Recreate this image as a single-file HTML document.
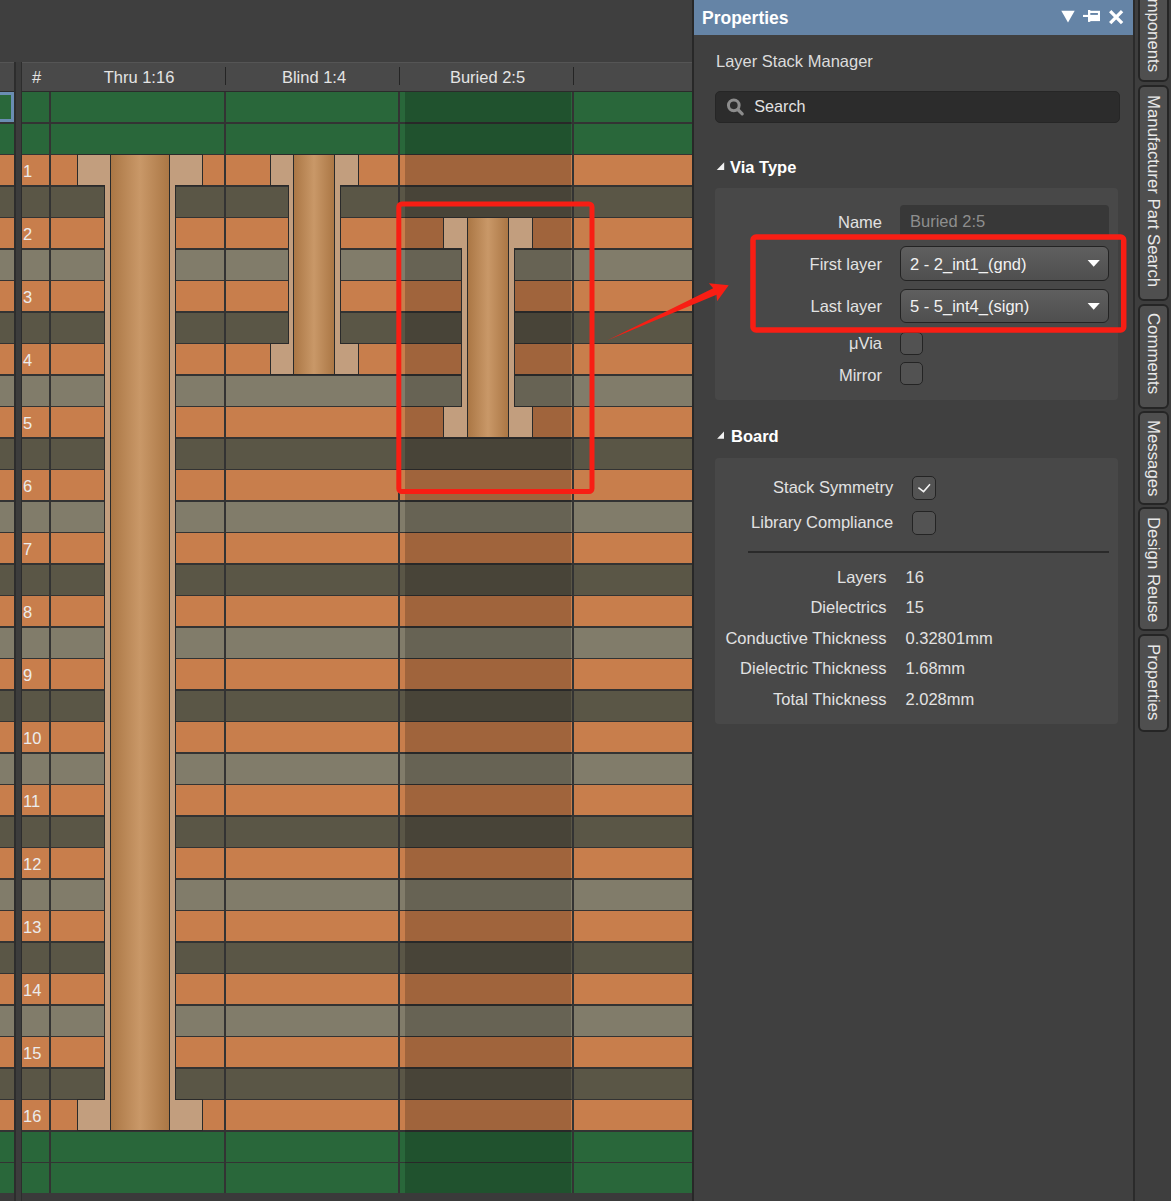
<!DOCTYPE html>
<html><head><meta charset="utf-8"><style>
html,body{margin:0;padding:0}
body{width:1171px;height:1201px;overflow:hidden;position:relative;background:#404040;font-family:"Liberation Sans", sans-serif;color:#e2e2e2}
.hd{position:absolute;top:66.7px;height:20px;line-height:20px;font-size:16.5px;text-align:center;color:#e4e4e4;white-space:nowrap}
.tx{position:absolute;font-size:16.5px;line-height:0;white-space:nowrap;color:#e2e2e2}
.tx::before,.txr::before{content:'';}
.txr{position:absolute;font-size:16.5px;line-height:0;white-space:nowrap;color:#e2e2e2;text-align:right}
.vt{position:absolute;writing-mode:vertical-rl;font-size:16.8px;line-height:20px;white-space:nowrap;color:#e8e8e8}
.lbl{position:absolute;left:23px;font-size:16.5px;line-height:19px;color:#ececec}
</style></head><body>
<svg width="694" height="1201" viewBox="0 0 694 1201" style="position:absolute;left:0;top:0" shape-rendering="crispEdges">
<defs><linearGradient id="bar" x1="0" x2="1" y1="0" y2="0"><stop offset="0" stop-color="#ab7745"/><stop offset="0.5" stop-color="#c99868"/><stop offset="1" stop-color="#ab7745"/></linearGradient></defs>
<rect x="0" y="0" width="694" height="1201" fill="#3f3f3f"/>
<rect x="0" y="62" width="692" height="29" fill="#494949"/>
<rect x="0" y="62" width="692" height="1" fill="#555555"/>
<rect x="0" y="91" width="692" height="1102" fill="#333333"/>
<rect x="0" y="91" width="692" height="1" fill="#2b2b2b"/>
<rect x="0" y="1193" width="692" height="8" fill="#3a3a3a"/>
<rect x="692" y="0" width="2" height="1201" fill="#282828"/>
<rect x="0" y="92" width="14" height="30" fill="#29673a"/>
<rect x="22" y="92" width="27" height="30" fill="#29673a"/>
<rect x="51" y="92" width="173" height="30" fill="#29673a"/>
<rect x="226" y="92" width="172" height="30" fill="#29673a"/>
<rect x="400" y="92" width="172" height="30" fill="#29673a"/>
<rect x="574" y="92" width="118" height="30" fill="#29673a"/>
<rect x="0" y="124" width="14" height="30" fill="#29673a"/>
<rect x="22" y="124" width="27" height="30" fill="#29673a"/>
<rect x="51" y="124" width="173" height="30" fill="#29673a"/>
<rect x="226" y="124" width="172" height="30" fill="#29673a"/>
<rect x="400" y="124" width="172" height="30" fill="#29673a"/>
<rect x="574" y="124" width="118" height="30" fill="#29673a"/>
<rect x="0" y="155" width="14" height="30" fill="#c87e4c"/>
<rect x="22" y="155" width="27" height="30" fill="#c87e4c"/>
<rect x="51" y="155" width="173" height="30" fill="#c87e4c"/>
<rect x="226" y="155" width="172" height="30" fill="#c87e4c"/>
<rect x="400" y="155" width="172" height="30" fill="#c87e4c"/>
<rect x="574" y="155" width="118" height="30" fill="#c87e4c"/>
<rect x="0" y="187" width="14" height="30" fill="#5a5646"/>
<rect x="22" y="187" width="27" height="30" fill="#5a5646"/>
<rect x="51" y="187" width="173" height="30" fill="#5a5646"/>
<rect x="226" y="187" width="172" height="30" fill="#5a5646"/>
<rect x="400" y="187" width="172" height="30" fill="#5a5646"/>
<rect x="574" y="187" width="118" height="30" fill="#5a5646"/>
<rect x="0" y="218" width="14" height="30" fill="#c87e4c"/>
<rect x="22" y="218" width="27" height="30" fill="#c87e4c"/>
<rect x="51" y="218" width="173" height="30" fill="#c87e4c"/>
<rect x="226" y="218" width="172" height="30" fill="#c87e4c"/>
<rect x="400" y="218" width="172" height="30" fill="#c87e4c"/>
<rect x="574" y="218" width="118" height="30" fill="#c87e4c"/>
<rect x="0" y="250" width="14" height="30" fill="#817c6a"/>
<rect x="22" y="250" width="27" height="30" fill="#817c6a"/>
<rect x="51" y="250" width="173" height="30" fill="#817c6a"/>
<rect x="226" y="250" width="172" height="30" fill="#817c6a"/>
<rect x="400" y="250" width="172" height="30" fill="#817c6a"/>
<rect x="574" y="250" width="118" height="30" fill="#817c6a"/>
<rect x="0" y="281" width="14" height="30" fill="#c87e4c"/>
<rect x="22" y="281" width="27" height="30" fill="#c87e4c"/>
<rect x="51" y="281" width="173" height="30" fill="#c87e4c"/>
<rect x="226" y="281" width="172" height="30" fill="#c87e4c"/>
<rect x="400" y="281" width="172" height="30" fill="#c87e4c"/>
<rect x="574" y="281" width="118" height="30" fill="#c87e4c"/>
<rect x="0" y="313" width="14" height="30" fill="#5a5646"/>
<rect x="22" y="313" width="27" height="30" fill="#5a5646"/>
<rect x="51" y="313" width="173" height="30" fill="#5a5646"/>
<rect x="226" y="313" width="172" height="30" fill="#5a5646"/>
<rect x="400" y="313" width="172" height="30" fill="#5a5646"/>
<rect x="574" y="313" width="118" height="30" fill="#5a5646"/>
<rect x="0" y="344" width="14" height="30" fill="#c87e4c"/>
<rect x="22" y="344" width="27" height="30" fill="#c87e4c"/>
<rect x="51" y="344" width="173" height="30" fill="#c87e4c"/>
<rect x="226" y="344" width="172" height="30" fill="#c87e4c"/>
<rect x="400" y="344" width="172" height="30" fill="#c87e4c"/>
<rect x="574" y="344" width="118" height="30" fill="#c87e4c"/>
<rect x="0" y="376" width="14" height="30" fill="#817c6a"/>
<rect x="22" y="376" width="27" height="30" fill="#817c6a"/>
<rect x="51" y="376" width="173" height="30" fill="#817c6a"/>
<rect x="226" y="376" width="172" height="30" fill="#817c6a"/>
<rect x="400" y="376" width="172" height="30" fill="#817c6a"/>
<rect x="574" y="376" width="118" height="30" fill="#817c6a"/>
<rect x="0" y="407" width="14" height="30" fill="#c87e4c"/>
<rect x="22" y="407" width="27" height="30" fill="#c87e4c"/>
<rect x="51" y="407" width="173" height="30" fill="#c87e4c"/>
<rect x="226" y="407" width="172" height="30" fill="#c87e4c"/>
<rect x="400" y="407" width="172" height="30" fill="#c87e4c"/>
<rect x="574" y="407" width="118" height="30" fill="#c87e4c"/>
<rect x="0" y="439" width="14" height="30" fill="#5a5646"/>
<rect x="22" y="439" width="27" height="30" fill="#5a5646"/>
<rect x="51" y="439" width="173" height="30" fill="#5a5646"/>
<rect x="226" y="439" width="172" height="30" fill="#5a5646"/>
<rect x="400" y="439" width="172" height="30" fill="#5a5646"/>
<rect x="574" y="439" width="118" height="30" fill="#5a5646"/>
<rect x="0" y="470" width="14" height="30" fill="#c87e4c"/>
<rect x="22" y="470" width="27" height="30" fill="#c87e4c"/>
<rect x="51" y="470" width="173" height="30" fill="#c87e4c"/>
<rect x="226" y="470" width="172" height="30" fill="#c87e4c"/>
<rect x="400" y="470" width="172" height="30" fill="#c87e4c"/>
<rect x="574" y="470" width="118" height="30" fill="#c87e4c"/>
<rect x="0" y="502" width="14" height="30" fill="#817c6a"/>
<rect x="22" y="502" width="27" height="30" fill="#817c6a"/>
<rect x="51" y="502" width="173" height="30" fill="#817c6a"/>
<rect x="226" y="502" width="172" height="30" fill="#817c6a"/>
<rect x="400" y="502" width="172" height="30" fill="#817c6a"/>
<rect x="574" y="502" width="118" height="30" fill="#817c6a"/>
<rect x="0" y="533" width="14" height="30" fill="#c87e4c"/>
<rect x="22" y="533" width="27" height="30" fill="#c87e4c"/>
<rect x="51" y="533" width="173" height="30" fill="#c87e4c"/>
<rect x="226" y="533" width="172" height="30" fill="#c87e4c"/>
<rect x="400" y="533" width="172" height="30" fill="#c87e4c"/>
<rect x="574" y="533" width="118" height="30" fill="#c87e4c"/>
<rect x="0" y="565" width="14" height="30" fill="#5a5646"/>
<rect x="22" y="565" width="27" height="30" fill="#5a5646"/>
<rect x="51" y="565" width="173" height="30" fill="#5a5646"/>
<rect x="226" y="565" width="172" height="30" fill="#5a5646"/>
<rect x="400" y="565" width="172" height="30" fill="#5a5646"/>
<rect x="574" y="565" width="118" height="30" fill="#5a5646"/>
<rect x="0" y="596" width="14" height="30" fill="#c87e4c"/>
<rect x="22" y="596" width="27" height="30" fill="#c87e4c"/>
<rect x="51" y="596" width="173" height="30" fill="#c87e4c"/>
<rect x="226" y="596" width="172" height="30" fill="#c87e4c"/>
<rect x="400" y="596" width="172" height="30" fill="#c87e4c"/>
<rect x="574" y="596" width="118" height="30" fill="#c87e4c"/>
<rect x="0" y="628" width="14" height="30" fill="#817c6a"/>
<rect x="22" y="628" width="27" height="30" fill="#817c6a"/>
<rect x="51" y="628" width="173" height="30" fill="#817c6a"/>
<rect x="226" y="628" width="172" height="30" fill="#817c6a"/>
<rect x="400" y="628" width="172" height="30" fill="#817c6a"/>
<rect x="574" y="628" width="118" height="30" fill="#817c6a"/>
<rect x="0" y="659" width="14" height="30" fill="#c87e4c"/>
<rect x="22" y="659" width="27" height="30" fill="#c87e4c"/>
<rect x="51" y="659" width="173" height="30" fill="#c87e4c"/>
<rect x="226" y="659" width="172" height="30" fill="#c87e4c"/>
<rect x="400" y="659" width="172" height="30" fill="#c87e4c"/>
<rect x="574" y="659" width="118" height="30" fill="#c87e4c"/>
<rect x="0" y="691" width="14" height="30" fill="#5a5646"/>
<rect x="22" y="691" width="27" height="30" fill="#5a5646"/>
<rect x="51" y="691" width="173" height="30" fill="#5a5646"/>
<rect x="226" y="691" width="172" height="30" fill="#5a5646"/>
<rect x="400" y="691" width="172" height="30" fill="#5a5646"/>
<rect x="574" y="691" width="118" height="30" fill="#5a5646"/>
<rect x="0" y="722" width="14" height="30" fill="#c87e4c"/>
<rect x="22" y="722" width="27" height="30" fill="#c87e4c"/>
<rect x="51" y="722" width="173" height="30" fill="#c87e4c"/>
<rect x="226" y="722" width="172" height="30" fill="#c87e4c"/>
<rect x="400" y="722" width="172" height="30" fill="#c87e4c"/>
<rect x="574" y="722" width="118" height="30" fill="#c87e4c"/>
<rect x="0" y="754" width="14" height="30" fill="#817c6a"/>
<rect x="22" y="754" width="27" height="30" fill="#817c6a"/>
<rect x="51" y="754" width="173" height="30" fill="#817c6a"/>
<rect x="226" y="754" width="172" height="30" fill="#817c6a"/>
<rect x="400" y="754" width="172" height="30" fill="#817c6a"/>
<rect x="574" y="754" width="118" height="30" fill="#817c6a"/>
<rect x="0" y="785" width="14" height="30" fill="#c87e4c"/>
<rect x="22" y="785" width="27" height="30" fill="#c87e4c"/>
<rect x="51" y="785" width="173" height="30" fill="#c87e4c"/>
<rect x="226" y="785" width="172" height="30" fill="#c87e4c"/>
<rect x="400" y="785" width="172" height="30" fill="#c87e4c"/>
<rect x="574" y="785" width="118" height="30" fill="#c87e4c"/>
<rect x="0" y="817" width="14" height="30" fill="#5a5646"/>
<rect x="22" y="817" width="27" height="30" fill="#5a5646"/>
<rect x="51" y="817" width="173" height="30" fill="#5a5646"/>
<rect x="226" y="817" width="172" height="30" fill="#5a5646"/>
<rect x="400" y="817" width="172" height="30" fill="#5a5646"/>
<rect x="574" y="817" width="118" height="30" fill="#5a5646"/>
<rect x="0" y="848" width="14" height="30" fill="#c87e4c"/>
<rect x="22" y="848" width="27" height="30" fill="#c87e4c"/>
<rect x="51" y="848" width="173" height="30" fill="#c87e4c"/>
<rect x="226" y="848" width="172" height="30" fill="#c87e4c"/>
<rect x="400" y="848" width="172" height="30" fill="#c87e4c"/>
<rect x="574" y="848" width="118" height="30" fill="#c87e4c"/>
<rect x="0" y="880" width="14" height="30" fill="#817c6a"/>
<rect x="22" y="880" width="27" height="30" fill="#817c6a"/>
<rect x="51" y="880" width="173" height="30" fill="#817c6a"/>
<rect x="226" y="880" width="172" height="30" fill="#817c6a"/>
<rect x="400" y="880" width="172" height="30" fill="#817c6a"/>
<rect x="574" y="880" width="118" height="30" fill="#817c6a"/>
<rect x="0" y="911" width="14" height="30" fill="#c87e4c"/>
<rect x="22" y="911" width="27" height="30" fill="#c87e4c"/>
<rect x="51" y="911" width="173" height="30" fill="#c87e4c"/>
<rect x="226" y="911" width="172" height="30" fill="#c87e4c"/>
<rect x="400" y="911" width="172" height="30" fill="#c87e4c"/>
<rect x="574" y="911" width="118" height="30" fill="#c87e4c"/>
<rect x="0" y="943" width="14" height="30" fill="#5a5646"/>
<rect x="22" y="943" width="27" height="30" fill="#5a5646"/>
<rect x="51" y="943" width="173" height="30" fill="#5a5646"/>
<rect x="226" y="943" width="172" height="30" fill="#5a5646"/>
<rect x="400" y="943" width="172" height="30" fill="#5a5646"/>
<rect x="574" y="943" width="118" height="30" fill="#5a5646"/>
<rect x="0" y="974" width="14" height="30" fill="#c87e4c"/>
<rect x="22" y="974" width="27" height="30" fill="#c87e4c"/>
<rect x="51" y="974" width="173" height="30" fill="#c87e4c"/>
<rect x="226" y="974" width="172" height="30" fill="#c87e4c"/>
<rect x="400" y="974" width="172" height="30" fill="#c87e4c"/>
<rect x="574" y="974" width="118" height="30" fill="#c87e4c"/>
<rect x="0" y="1006" width="14" height="30" fill="#817c6a"/>
<rect x="22" y="1006" width="27" height="30" fill="#817c6a"/>
<rect x="51" y="1006" width="173" height="30" fill="#817c6a"/>
<rect x="226" y="1006" width="172" height="30" fill="#817c6a"/>
<rect x="400" y="1006" width="172" height="30" fill="#817c6a"/>
<rect x="574" y="1006" width="118" height="30" fill="#817c6a"/>
<rect x="0" y="1037" width="14" height="30" fill="#c87e4c"/>
<rect x="22" y="1037" width="27" height="30" fill="#c87e4c"/>
<rect x="51" y="1037" width="173" height="30" fill="#c87e4c"/>
<rect x="226" y="1037" width="172" height="30" fill="#c87e4c"/>
<rect x="400" y="1037" width="172" height="30" fill="#c87e4c"/>
<rect x="574" y="1037" width="118" height="30" fill="#c87e4c"/>
<rect x="0" y="1069" width="14" height="30" fill="#5a5646"/>
<rect x="22" y="1069" width="27" height="30" fill="#5a5646"/>
<rect x="51" y="1069" width="173" height="30" fill="#5a5646"/>
<rect x="226" y="1069" width="172" height="30" fill="#5a5646"/>
<rect x="400" y="1069" width="172" height="30" fill="#5a5646"/>
<rect x="574" y="1069" width="118" height="30" fill="#5a5646"/>
<rect x="0" y="1100" width="14" height="30" fill="#c87e4c"/>
<rect x="22" y="1100" width="27" height="30" fill="#c87e4c"/>
<rect x="51" y="1100" width="173" height="30" fill="#c87e4c"/>
<rect x="226" y="1100" width="172" height="30" fill="#c87e4c"/>
<rect x="400" y="1100" width="172" height="30" fill="#c87e4c"/>
<rect x="574" y="1100" width="118" height="30" fill="#c87e4c"/>
<rect x="0" y="1132" width="14" height="30" fill="#29673a"/>
<rect x="22" y="1132" width="27" height="30" fill="#29673a"/>
<rect x="51" y="1132" width="173" height="30" fill="#29673a"/>
<rect x="226" y="1132" width="172" height="30" fill="#29673a"/>
<rect x="400" y="1132" width="172" height="30" fill="#29673a"/>
<rect x="574" y="1132" width="118" height="30" fill="#29673a"/>
<rect x="0" y="1163" width="14" height="30" fill="#29673a"/>
<rect x="22" y="1163" width="27" height="30" fill="#29673a"/>
<rect x="51" y="1163" width="173" height="30" fill="#29673a"/>
<rect x="226" y="1163" width="172" height="30" fill="#29673a"/>
<rect x="400" y="1163" width="172" height="30" fill="#29673a"/>
<rect x="574" y="1163" width="118" height="30" fill="#29673a"/>
<rect x="405" y="92" width="166" height="1101" fill="#000" fill-opacity="0.2"/>
<rect x="-10" y="93.5" width="22.5" height="27" fill="none" stroke="#6a8db3" stroke-width="3"/>
<rect x="14" y="62" width="8" height="1139" fill="#3c3c3c"/>
<rect x="14" y="62" width="2" height="1139" fill="#2d2d2d"/>
<rect x="21" y="62" width="1" height="1139" fill="#2d2d2d"/>
<rect x="225" y="67" width="1" height="18" fill="#242424"/>
<rect x="399" y="67" width="1" height="18" fill="#242424"/>
<rect x="573" y="67" width="1" height="18" fill="#242424"/>
<rect x="77" y="154" width="126" height="32" fill="#2a2a2a"/><rect x="104" y="154" width="72" height="977" fill="#2a2a2a"/><rect x="77" y="1099" width="126" height="32" fill="#2a2a2a"/><rect x="78" y="155" width="124" height="30" fill="#c29e7e"/><rect x="105" y="155" width="70" height="975" fill="#c29e7e"/><rect x="78" y="1100" width="124" height="30" fill="#c29e7e"/><rect x="110" y="154" width="60" height="977" fill="#2a2a2a"/><rect x="111" y="155" width="58" height="975" fill="url(#bar)"/>
<rect x="270" y="154" width="89" height="32" fill="#2a2a2a"/><rect x="288" y="154" width="53" height="221" fill="#2a2a2a"/><rect x="270" y="343" width="89" height="32" fill="#2a2a2a"/><rect x="271" y="155" width="87" height="30" fill="#c29e7e"/><rect x="289" y="155" width="51" height="219" fill="#c29e7e"/><rect x="271" y="344" width="87" height="30" fill="#c29e7e"/><rect x="293" y="154" width="42" height="221" fill="#2a2a2a"/><rect x="294" y="155" width="40" height="219" fill="url(#bar)"/>
<rect x="443" y="217" width="90" height="32" fill="#2a2a2a"/><rect x="461" y="217" width="54" height="221" fill="#2a2a2a"/><rect x="443" y="406" width="90" height="32" fill="#2a2a2a"/><rect x="444" y="218" width="88" height="30" fill="#c29e7e"/><rect x="462" y="218" width="52" height="219" fill="#c29e7e"/><rect x="444" y="407" width="88" height="30" fill="#c29e7e"/><rect x="467" y="217" width="42" height="221" fill="#2a2a2a"/><rect x="468" y="218" width="40" height="219" fill="url(#bar)"/>
</svg>
<div class="hd" style="left:32px;width:11px;text-align:left">#</div><div class="hd" style="left:51px;width:176px">Thru 1:16</div><div class="hd" style="left:226px;width:176px">Blind 1:4</div><div class="hd" style="left:400px;width:175px">Buried 2:5</div><div class="lbl" style="top:162px">1</div><div class="lbl" style="top:225px">2</div><div class="lbl" style="top:288px">3</div><div class="lbl" style="top:351px">4</div><div class="lbl" style="top:414px">5</div><div class="lbl" style="top:477px">6</div><div class="lbl" style="top:540px">7</div><div class="lbl" style="top:603px">8</div><div class="lbl" style="top:666px">9</div><div class="lbl" style="top:729px">10</div><div class="lbl" style="top:792px">11</div><div class="lbl" style="top:855px">12</div><div class="lbl" style="top:918px">13</div><div class="lbl" style="top:981px">14</div><div class="lbl" style="top:1044px">15</div><div class="lbl" style="top:1107px">16</div>
<div style="position:absolute;left:694px;top:0;width:439px;height:1201px;background:#404040"></div>
<div style="position:absolute;left:694px;top:0;width:439px;height:35px;background:#6584a6"></div>
<div class="tx" style="left:702px;top:17.94px;font-size:17.5px;font-weight:bold;color:#ffffff;">Properties</div>
<svg style="position:absolute;left:1055px;top:5px" width="78" height="25" viewBox="1055 5 78 25"><polygon points="1061.3,10.8 1074.7,10.8 1068,22.4" fill="#fff"/><rect x="1083" y="14.9" width="5.2" height="2.1" fill="#fff"/><rect x="1088" y="10" width="2.3" height="11.9" fill="#fff"/><rect x="1090" y="10.8" width="10" height="10.3" fill="#fff"/><rect x="1090.3" y="13" width="7.6" height="1.9" fill="#6584a6"/><path d="M1110.2,11.2 L1122.1,23.1 M1122.1,11.2 L1110.2,23.1" stroke="#fff" stroke-width="3.3" stroke-linecap="butt"/></svg>
<div class="tx" style="left:716px;top:61.28px;font-size:16.5px;color:#dcdcdc;">Layer Stack Manager</div>
<div style="position:absolute;left:715px;top:91px;width:403px;height:30px;background:#2c2c2c;border:1px solid #262626;border-radius:5px"></div>
<svg style="position:absolute;left:724px;top:95px" width="24" height="24" viewBox="724 95 24 24"><circle cx="733.8" cy="105.3" r="5.35" fill="none" stroke="#8c8c8c" stroke-width="3"/><path d="M737.8,109.5 L742.2,113.9" stroke="#8c8c8c" stroke-width="3.2" stroke-linecap="round"/></svg>
<div class="tx" style="left:754.2px;top:106.39px;font-size:16.2px;color:#e2e2e2;">Search</div>
<svg style="position:absolute;left:715px;top:160px" width="12" height="12" viewBox="715 160 12 12"><polygon points="724.2,162.3 724.2,170.1 716.7,170.1" fill="#f2f2f2"/></svg>
<div class="tx" style="left:730px;top:167.28px;font-size:16.5px;font-weight:bold;color:#ffffff;">Via Type</div>
<div style="position:absolute;left:715px;top:188px;width:403px;height:212px;background:#484848;border-radius:4px"></div>
<div class="tx" style="right:289px;top:222.28px;font-size:16.5px;color:#e2e2e2;">Name</div>
<div class="tx" style="right:289px;top:264.28px;font-size:16.5px;color:#e2e2e2;">First layer</div>
<div class="tx" style="right:289px;top:306.28px;font-size:16.5px;color:#e2e2e2;">Last layer</div>
<div class="tx" style="right:289px;top:343.28px;font-size:16.5px;color:#e2e2e2;">μVia</div>
<div class="tx" style="right:289px;top:375.28px;font-size:16.5px;color:#e2e2e2;">Mirror</div>
<div style="position:absolute;left:900px;top:205px;width:209px;height:34px;background:#383838;border-radius:4px"></div>
<div class="tx" style="left:910px;top:221.28px;font-size:16.5px;color:#8e8e8e;">Buried 2:5</div>
<div style="position:absolute;box-sizing:border-box;left:900.3px;top:246.2px;width:208.6px;height:34.4px;border:1.5px solid #232323;border-radius:6px;background:linear-gradient(#5f5f5f,#4f4f4f)"></div>
<div class="tx" style="left:910px;top:264.28px;font-size:16.5px;color:#f2f2f2;">2 - 2_int1_(gnd)</div>
<svg style="position:absolute;left:1086px;top:259px" width="16" height="10" viewBox="1086 259 16 10"><polygon points="1087.6,260 1099.8,260 1093.7,266.8" fill="#fff"/></svg>
<div style="position:absolute;box-sizing:border-box;left:900.3px;top:288.6px;width:208.6px;height:34.0px;border:1.5px solid #232323;border-radius:6px;background:linear-gradient(#5f5f5f,#4f4f4f)"></div>
<div class="tx" style="left:910px;top:306.28px;font-size:16.5px;color:#f2f2f2;">5 - 5_int4_(sign)</div>
<svg style="position:absolute;left:1086px;top:301.9px" width="16" height="10" viewBox="1086 301.9 16 10"><polygon points="1087.6,302.9 1099.8,302.9 1093.7,309.7" fill="#fff"/></svg>
<div style="position:absolute;box-sizing:border-box;left:900.4px;top:332.1px;width:23px;height:22.5px;border:1.5px solid #242424;border-radius:5px;background:#525252"></div>
<div style="position:absolute;box-sizing:border-box;left:900.4px;top:362.3px;width:23px;height:22.5px;border:1.5px solid #242424;border-radius:5px;background:#525252"></div>
<svg style="position:absolute;left:715px;top:429px" width="12" height="12" viewBox="715 429 12 12"><polygon points="724,431.6 724,438.8 717.1,438.8" fill="#f2f2f2"/></svg>
<div class="tx" style="left:731px;top:436.28px;font-size:16.5px;font-weight:bold;color:#ffffff;">Board</div>
<div style="position:absolute;left:715px;top:457.5px;width:403px;height:266.5px;background:#484848;border-radius:4px"></div>
<div class="tx" style="right:277.79999999999995px;top:487.28px;font-size:16.5px;color:#e2e2e2;">Stack Symmetry</div>
<div class="tx" style="right:277.79999999999995px;top:522.28px;font-size:16.5px;color:#e2e2e2;">Library Compliance</div>
<div style="position:absolute;box-sizing:border-box;left:912.2px;top:476.1px;width:23.5px;height:23.6px;border:1.5px solid #242424;border-radius:5px;background:#535353"></div>
<div style="position:absolute;box-sizing:border-box;left:912.2px;top:511.1px;width:23.5px;height:23.6px;border:1.5px solid #242424;border-radius:5px;background:#535353"></div>
<svg style="position:absolute;left:912px;top:476px" width="24" height="24" viewBox="912 476 24 24"><path d="M918.4,487.6 L923.6,491.6 L930,484.2" fill="none" stroke="#f4f4f4" stroke-width="1.5"/></svg>
<div style="position:absolute;left:748px;top:551px;width:361px;height:2px;background:#2a2a2a"></div>
<div class="tx" style="right:284.5px;top:577.48px;font-size:16.5px;color:#e2e2e2;">Layers</div>
<div class="tx" style="left:905.5px;top:577.48px;font-size:16.5px;color:#e2e2e2;">16</div>
<div class="tx" style="right:284.5px;top:607.28px;font-size:16.5px;color:#e2e2e2;">Dielectrics</div>
<div class="tx" style="left:905.5px;top:607.28px;font-size:16.5px;color:#e2e2e2;">15</div>
<div class="tx" style="right:284.5px;top:638.28px;font-size:16.5px;color:#e2e2e2;">Conductive Thickness</div>
<div class="tx" style="left:905.5px;top:638.28px;font-size:16.5px;color:#e2e2e2;">0.32801mm</div>
<div class="tx" style="right:284.5px;top:668.28px;font-size:16.5px;color:#e2e2e2;">Dielectric Thickness</div>
<div class="tx" style="left:905.5px;top:668.28px;font-size:16.5px;color:#e2e2e2;">1.68mm</div>
<div class="tx" style="right:284.5px;top:698.68px;font-size:16.5px;color:#e2e2e2;">Total Thickness</div>
<div class="tx" style="left:905.5px;top:698.68px;font-size:16.5px;color:#e2e2e2;">2.028mm</div>
<div style="position:absolute;left:1133px;top:0;width:38px;height:1201px;background:#3e3e3e"></div>
<div style="position:absolute;left:1133px;top:0;width:2px;height:1201px;background:#2b2b2b"></div>
<div style="position:absolute;box-sizing:border-box;left:1138.2px;top:-12px;width:31px;height:94px;border:2px solid #252525;border-radius:6px;background:#4f4f4f"></div>
<div class="vt" style="left:1143px;top:-23.5px">Components</div>
<div style="position:absolute;box-sizing:border-box;left:1138.2px;top:85px;width:31px;height:215.5px;border:2px solid #252525;border-radius:6px;background:#4f4f4f"></div>
<div class="vt" style="left:1143px;top:94.5px">Manufacturer Part Search</div>
<div style="position:absolute;box-sizing:border-box;left:1138.2px;top:303.5px;width:31px;height:105.0px;border:2px solid #252525;border-radius:6px;background:#4f4f4f"></div>
<div class="vt" style="left:1143px;top:313.0px">Comments</div>
<div style="position:absolute;box-sizing:border-box;left:1138.2px;top:410.7px;width:31px;height:94.80000000000001px;border:2px solid #252525;border-radius:6px;background:#4f4f4f"></div>
<div class="vt" style="left:1143px;top:420.2px">Messages</div>
<div style="position:absolute;box-sizing:border-box;left:1138.2px;top:507px;width:31px;height:124px;border:2px solid #252525;border-radius:6px;background:#4f4f4f"></div>
<div class="vt" style="left:1143px;top:516.5px">Design Reuse</div>
<div style="position:absolute;box-sizing:border-box;left:1138.2px;top:634px;width:31px;height:98px;border:2px solid #252525;border-radius:6px;background:#4f4f4f"></div>
<div class="vt" style="left:1143px;top:643.5px">Properties</div>
<svg style="position:absolute;left:0;top:0" width="1171" height="1201" viewBox="0 0 1171 1201"><rect x="398.8" y="204" width="193.2" height="287.5" rx="3" ry="3" fill="none" stroke="#f81e14" stroke-width="5"/><rect x="753" y="237" width="370.7" height="92.9" rx="3" ry="3" fill="none" stroke="#f81e14" stroke-width="5.5"/><polygon points="607,340.5 713.2,288.3 708.9,283.2 728.7,285.3 717.1,301.2 716.5,294.8" fill="#f81e14"/></svg>
</body></html>
